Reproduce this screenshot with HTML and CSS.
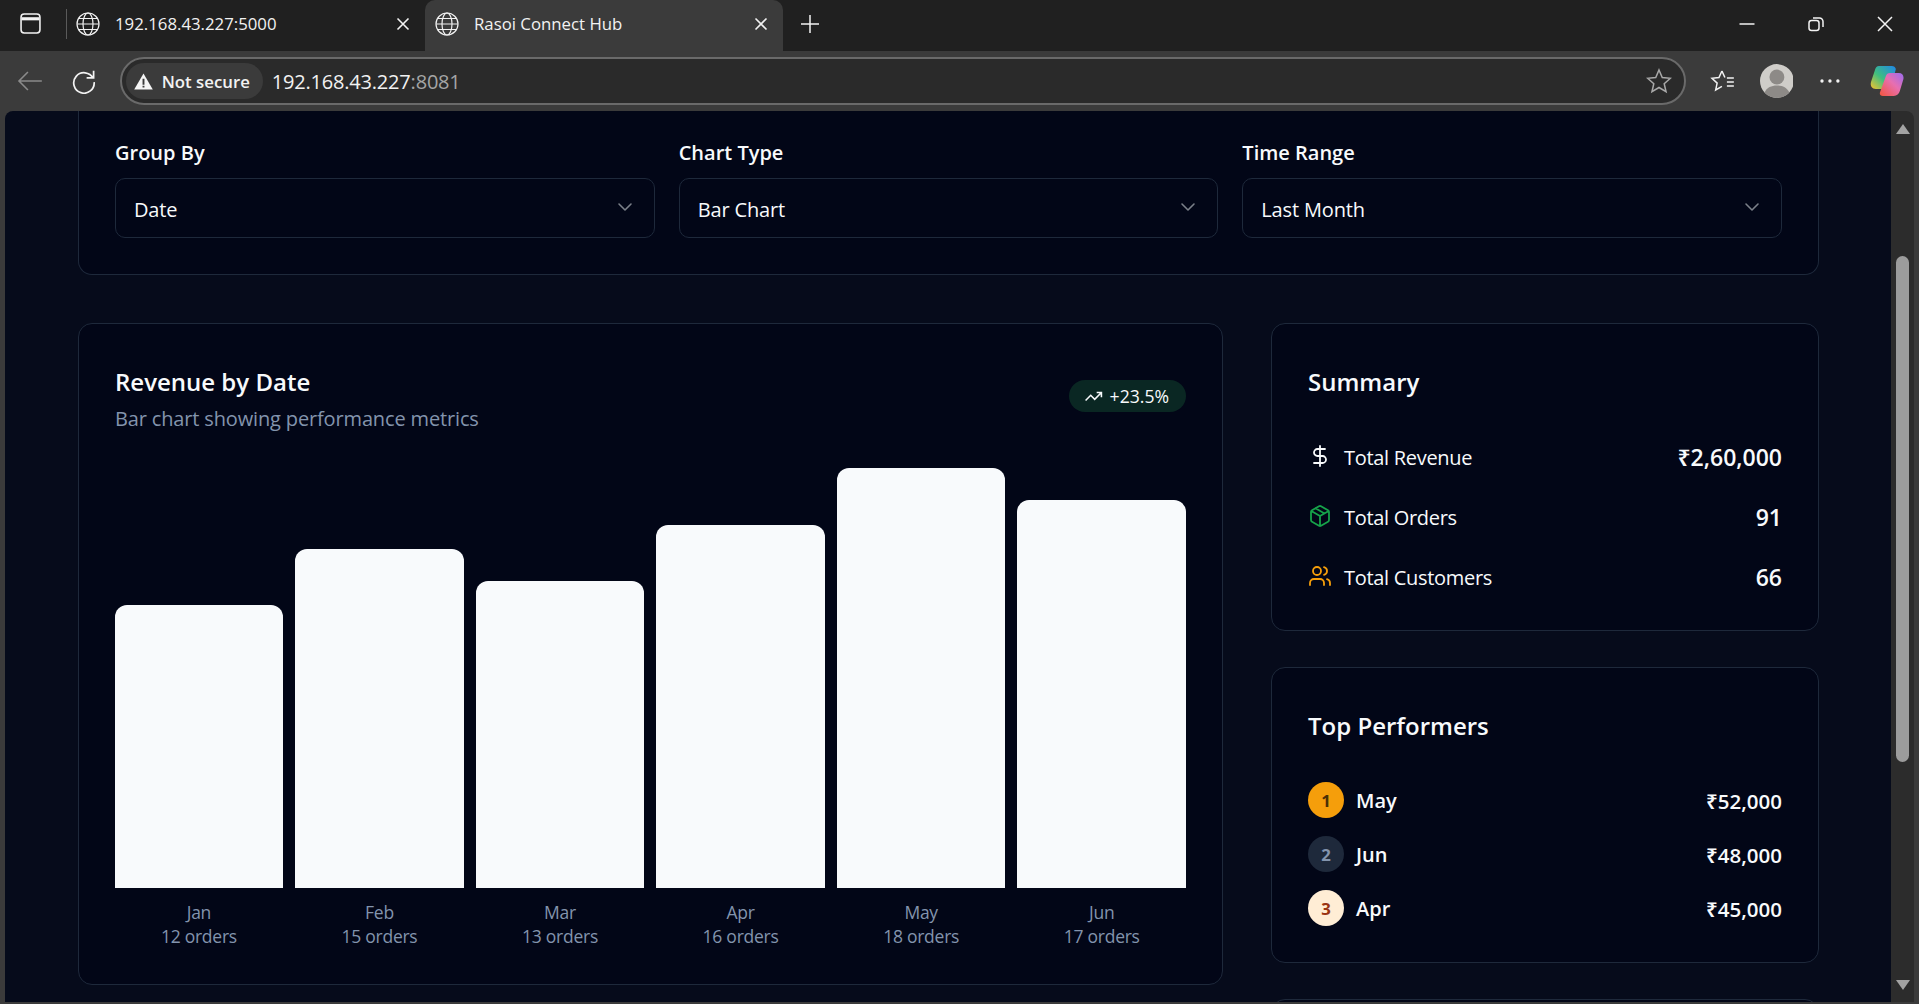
FILE: index.html
```html
<!DOCTYPE html>
<html lang="en">
<head>
<meta charset="utf-8">
<title>Rasoi Connect Hub</title>
<link rel="stylesheet" href="styles.css">
</head>
<body>
<svg class="defs" width="0" height="0" aria-hidden="true">
  <symbol id="globe" viewBox="0 0 24 24"><circle cx="12" cy="12" r="11"/><ellipse cx="12" cy="12" rx="5" ry="11"/><path d="M1 12h22M2.6 6.5h18.8M2.6 17.5h18.8"/></symbol>
  <symbol id="close" viewBox="0 0 14 14"><path d="M1.5 1.5l11 11M12.5 1.5l-11 11"/></symbol>
  <symbol id="chev" viewBox="0 0 24 24"><path d="m6 9 6 6 6-6"/></symbol>
  <linearGradient id="cpA" x1="0" y1="1" x2="1" y2="0"><stop offset="0" stop-color="#f7c32e"/><stop offset=".45" stop-color="#3fbf7f"/><stop offset="1" stop-color="#1f86e8"/></linearGradient>
  <linearGradient id="cpB" x1="0" y1="1" x2="1" y2="0"><stop offset="0" stop-color="#f2553d"/><stop offset=".55" stop-color="#e86fb0"/><stop offset="1" stop-color="#9a6cf0"/></linearGradient>
</svg>

<header class="tabstrip">
  <svg class="sidebar-icon" viewBox="0 0 20 20"><rect x="1" y="1" width="18" height="18" rx="3"/><path d="M1.5 5.5h17" class="thick"/></svg>
  <span class="tab-divider"></span>
  <div class="tab">
    <svg class="globe"><use href="#globe"/></svg>
    <span class="tab-title">192.168.43.227:5000</span>
    <svg class="tab-close"><use href="#close"/></svg>
  </div>
  <div class="tab tab-active">
    <svg class="globe"><use href="#globe"/></svg>
    <span class="tab-title">Rasoi Connect Hub</span>
    <svg class="tab-close"><use href="#close"/></svg>
  </div>
  <svg class="new-tab" viewBox="0 0 20 20"><path d="M10 1v18M1 10h18"/></svg>
  <div class="win-controls">
    <svg class="win-btn" viewBox="0 0 16 16"><path d="M0.5 8h15"/></svg>
    <svg class="win-btn" viewBox="0 0 16 16"><rect x="1" y="4.5" width="10" height="10" rx="2.5"/><path d="M5 2h6.5A3.5 3.5 0 0 1 15 5.500V11"/></svg>
    <svg class="win-btn" viewBox="0 0 16 16"><path d="M1 1l14 14M15 1L1 15"/></svg>
  </div>
</header>

<nav class="toolbar">
  <svg class="tool back" viewBox="0 0 26 24"><path d="M25 12H2M11 3l-9 9 9 9"/></svg>
  <svg class="tool reload" viewBox="0 0 24 24"><path d="M20.500 9.500A9.500 9.500 0 1 0 21.500 13M21 2.500V9h-6.500"/></svg>
  <div class="omnibox">
    <div class="secure-pill">
      <svg class="warn" viewBox="0 0 18 16"><path d="M9 .5 17.800 15.500H.2Z"/><path class="warn-mark" d="M8.100 5.500h1.800v5.500H8.100zM8.100 12h1.800v1.800H8.100z"/></svg>
      <span>Not secure</span>
    </div>
    <span class="url">192.168.43.227<span class="url-port">:8081</span></span>
    <svg class="omni-star" viewBox="0 0 24 24"><path d="M12 1.800l3 7 7.500.7-5.700 5 1.700 7.400L12 18l-6.500 3.900 1.700-7.400-5.700-5 7.500-.7z"/></svg>
  </div>
  <svg class="fav" viewBox="0 0 26 24"><path d="M12 2 9 8.500l-7 .8 5.200 4.800L5.700 21l6.300-3.500M12 2l3 6.500M17 9h7M17 13h7M17 17h7"/></svg>
  <svg class="avatar" viewBox="0 0 34 34"><circle cx="17" cy="17" r="17" fill="#cfcdc9"/><circle cx="17" cy="13" r="7.500" fill="#8d8a87"/><path d="M4.500 28.500C7 23.500 11.500 21.500 17 21.500s10 2 12.500 7A17 17 0 0 1 4.500 28.500Z" fill="#8d8a87"/></svg>
  <svg class="dots" viewBox="0 0 20 4"><circle cx="2" cy="2" r="1.700"/><circle cx="10" cy="2" r="1.700"/><circle cx="18" cy="2" r="1.700"/></svg>
  <svg class="copilot" viewBox="0 0 34 32"><path fill="url(#cpA)" d="M9 1h13c2 0 3.500 1 4 3L22 20c-.7 2.500-2 4-5 4H6C2 24 0 21 1 17L5 5C5.700 2.500 7 1 9 1Z"/><path fill="url(#cpB)" d="M16 11c.7-2 2-3 4-3h9c3.500 0 5.500 3 4.500 6.500L30 26c-.8 3-3 5-6 5H13c-2.500 0-3.500-1.500-3-3.500Z"/></svg>
</nav>

<div class="viewport">
  <main class="page">
    <section class="card filters">
      <div class="field">
        <label class="field-label">Group By</label>
        <div class="select"><span>Date</span><svg class="chev"><use href="#chev"/></svg></div>
      </div>
      <div class="field">
        <label class="field-label">Chart Type</label>
        <div class="select"><span>Bar Chart</span><svg class="chev"><use href="#chev"/></svg></div>
      </div>
      <div class="field">
        <label class="field-label">Time Range</label>
        <div class="select"><span>Last Month</span><svg class="chev"><use href="#chev"/></svg></div>
      </div>
    </section>

    <div class="columns">
      <section class="card chart-card">
        <div class="chart-head">
          <div>
            <h2 class="card-title">Revenue by Date</h2>
            <p class="card-sub">Bar chart showing performance metrics</p>
          </div>
          <span class="trend">
            <svg class="trend-icon" viewBox="0 0 24 24"><path d="M22 7l-8.500 8.500-5-5L2 17M16 7h6v6"/></svg>
            +23.5%
          </span>
        </div>
        <div class="bars">
          <div class="bar-col"><div class="bar-slot"><div class="bar" style="height:283px"></div></div><div class="bar-label">Jan<br>12 orders</div></div>
          <div class="bar-col"><div class="bar-slot"><div class="bar" style="height:339px"></div></div><div class="bar-label">Feb<br>15 orders</div></div>
          <div class="bar-col"><div class="bar-slot"><div class="bar" style="height:307px"></div></div><div class="bar-label">Mar<br>13 orders</div></div>
          <div class="bar-col"><div class="bar-slot"><div class="bar" style="height:363px"></div></div><div class="bar-label">Apr<br>16 orders</div></div>
          <div class="bar-col"><div class="bar-slot"><div class="bar" style="height:420px"></div></div><div class="bar-label">May<br>18 orders</div></div>
          <div class="bar-col"><div class="bar-slot"><div class="bar" style="height:388px"></div></div><div class="bar-label">Jun<br>17 orders</div></div>
        </div>
      </section>

      <aside class="side">
        <section class="card side-card">
          <h2 class="card-title">Summary</h2>
          <ul class="stat-list">
            <li class="stat">
              <svg class="stat-icon" viewBox="0 0 24 24"><path d="M12 2v20M17 5H9.500a3.500 3.500 0 0 0 0 7h5a3.500 3.500 0 0 1 0 7H6"/></svg>
              <span class="stat-name">Total Revenue</span><strong class="stat-value">₹2,60,000</strong>
            </li>
            <li class="stat">
              <svg class="stat-icon green" viewBox="0 0 24 24"><path d="m7.500 4.270 9 5.150M21 8a2 2 0 0 0-1-1.730l-7-4a2 2 0 0 0-2 0l-7 4A2 2 0 0 0 3 8v8a2 2 0 0 0 1 1.730l7 4a2 2 0 0 0 2 0l7-4A2 2 0 0 0 21 16ZM3.300 7l8.700 5 8.700-5M12 22V12"/></svg>
              <span class="stat-name">Total Orders</span><strong class="stat-value">91</strong>
            </li>
            <li class="stat">
              <svg class="stat-icon amber" viewBox="0 0 24 24"><path d="M16 21v-2a4 4 0 0 0-4-4H6a4 4 0 0 0-4 4v2M22 21v-2a4 4 0 0 0-3-3.870M16 3.130a4 4 0 0 1 0 7.750"/><circle cx="9" cy="7" r="4"/></svg>
              <span class="stat-name">Total Customers</span><strong class="stat-value">66</strong>
            </li>
          </ul>
        </section>

        <section class="card side-card">
          <h2 class="card-title">Top Performers</h2>
          <ul class="rank-list">
            <li class="rank"><span class="medal gold">1</span><span class="rank-name">May</span><span class="rank-value">₹52,000</span></li>
            <li class="rank"><span class="medal silver">2</span><span class="rank-name">Jun</span><span class="rank-value">₹48,000</span></li>
            <li class="rank"><span class="medal bronze">3</span><span class="rank-name">Apr</span><span class="rank-value">₹45,000</span></li>
          </ul>
        </section>

        <section class="card stub"></section>
      </aside>
    </div>
  </main>
  <div class="scrollbar">
    <span class="arrow-up"></span>
    <div class="track"><div class="thumb"></div></div>
    <span class="arrow-down"></span>
  </div>
</div>
</body>
</html>
```
FILE: styles.css
```css
* { box-sizing: border-box; }
html, body { margin: 0; height: 100%; overflow: hidden; }
body {
  display: flex;
  flex-direction: column;
  background: #3b3b3b;
  color: #f8fafc;
  font-family: "Open Sans", "Noto Sans", sans-serif;
}
.defs { position: absolute; }
h2, p, ul { margin: 0; padding: 0; }
ul { list-style: none; }
svg { display: block; fill: none; stroke: currentColor; }

/* browser chrome */
.tabstrip {
  height: 51px;
  flex: none;
  display: flex;
  align-items: center;
  background: #202020;
  color: #f2f2f2;
  font-size: 16.800px;
}
.sidebar-icon { width: 21px; height: 21px; margin: 0 0 4px 20px; stroke-width: 1.500; }
.sidebar-icon .thick { stroke-width: 3; }
.tab-divider { width: 1px; height: 30px; margin: 0 9px 4px 25px; background: #5a5a5a; }
.tab {
  width: 349px;
  height: 51px;
  display: flex;
  align-items: center;
  padding-bottom: 4px;
}
.tab-active {
  width: 358px;
  padding-left: 10px;
  background: #3b3b3b;
  border-radius: 10px 10px 0 0;
}
.globe { width: 24px; height: 24px; stroke-width: 1.200; flex: none; }
.tab-title { margin-left: 15px; flex: 1; }
.tab-close { width: 14px; height: 14px; stroke-width: 1.600; margin-right: 15px; flex: none; }
.new-tab { width: 20px; height: 20px; margin: 0 0 4px 17px; stroke-width: 1.500; }
.win-controls { margin: 0 26px 4px auto; display: flex; gap: 53px; }
.win-btn { width: 16px; height: 16px; stroke-width: 1.500; }

.toolbar {
  height: 60px;
  flex: none;
  display: flex;
  align-items: center;
  background: #3b3b3b;
  color: #f2f2f2;
  padding-right: 15px;
}
.tool { stroke-width: 1.600; }
.back { width: 26px; height: 24px; margin-left: 17px; color: #8a8a8a; }
.reload { width: 26px; height: 26px; margin-left: 28px; }
.omnibox {
  flex: none;
  margin-left: 23px;
  width: 1566px;
  height: 48px;
  display: flex;
  align-items: center;
  padding: 0 12px 0 4px;
  border: 2px solid #6a6a6a;
  border-radius: 24px;
  background: #2a2a2a;
}
.secure-pill {
  height: 36px;
  display: flex;
  align-items: center;
  gap: 9px;
  padding: 0 13px 0 8px;
  border-radius: 18px;
  background: #3b3b3b;
  font-size: 16.800px;
  font-weight: 600;
}
.warn { width: 19px; height: 17px; fill: #f5f5f5; stroke: none; }
.warn-mark { fill: #3b3b3b; }
.url { margin-left: 9px; font-size: 20px; letter-spacing: -.2px; flex: 1; }
.url-port { color: #a5a5a5; }
.omni-star { width: 26px; height: 26px; color: #a8a8a8; stroke-width: 1.400; }
.fav { width: 26px; height: 24px; margin-left: 24px; stroke-width: 1.500; }
.avatar { width: 34px; height: 34px; margin-left: 24px; stroke: none; }
.dots { width: 20px; height: 4px; margin-left: 27px; fill: #f2f2f2; stroke: none; }
.copilot { width: 34px; height: 32px; margin-left: 30px; stroke: none; }

/* viewport */
.viewport {
  height: 891px;
  flex: none;
  margin-left: 5px;
  margin-right: 5px;
  display: flex;
  border-radius: 8px 8px 0 0;
  overflow: hidden;
}
.page {
  flex: 1;
  min-width: 0;
  padding: 0 72px 0 73px;
  background: #060b1b;
  overflow: hidden;
}
.card {
  border: 1px solid #1e293b;
  border-radius: 14px;
  background: #020617;
}
.filters {
  border-top: 0;
  border-radius: 0 0 14px 14px;
  padding: 27px 36px 36px;
  display: grid;
  grid-template-columns: repeat(3, 1fr);
  gap: 24px;
}
.field-label {
  display: block;
  height: 29px;
  margin: 0 0 11px;
  line-height: 29px;
  font-size: 20px;
  font-weight: 600;
}
.select {
  height: 60px;
  display: flex;
  align-items: center;
  justify-content: space-between;
  padding: 2px 17px 0 18px;
  border: 1px solid #1e293b;
  border-radius: 10px;
  font-size: 20px;
  letter-spacing: -.15px;
}
.chev { width: 24px; height: 24px; margin-top: -5px; color: #7b8089; stroke-width: 1.600; stroke-linecap: round; stroke-linejoin: round; }

.columns {
  margin-top: 48px;
  display: grid;
  grid-template-columns: 1145fr 548fr;
  gap: 48px;
  align-items: start;
}
.chart-card { padding: 36px; height: 662px; }
.chart-head { display: flex; justify-content: space-between; align-items: flex-start; height: 73px; margin-bottom: 35px; }
.card-title {
  font-size: 24px;
  line-height: 44px;
  font-weight: 600;
}
.card-sub {
  font-size: 20px;
  line-height: 29px;
  color: #8394ad;
  letter-spacing: -.15px;
}
.trend {
  height: 32px;
  margin-top: 20px;
  display: flex;
  align-items: center;
  gap: 7px;
  padding: 0 17px 0 15px;
  border-radius: 16px;
  background: #0a2723;
  font-size: 17.600px;
  font-weight: 500;
}
.trend-icon { width: 19px; height: 19px; stroke-width: 2; }
.bars { display: flex; gap: 12px; margin-left: -.4px; }
.bar-col { flex: 1; min-width: 0; text-align: center; }
.bar-slot { height: 420px; display: flex; align-items: flex-end; }
.bar { width: 100%; background: #f8fafc; border-radius: 12px 12px 0 0; }
.bar-label {
  margin-top: 12px;
  font-size: 17.500px;
  line-height: 24px;
  color: #8394ad;
  letter-spacing: -.25px;
}

.side { display: flex; flex-direction: column; gap: 36px; }
.side-card { padding: 36px; }
.stat-list { margin-top: 34px; display: flex; flex-direction: column; gap: 24px; }
.stat { height: 36px; display: flex; align-items: center; }
.stat-icon { width: 24px; height: 24px; flex: none; stroke-width: 1.800; stroke-linecap: round; stroke-linejoin: round; }
.green { color: #16a34a; }
.amber { color: #f59e0b; }
.stat-name { margin-left: 12px; flex: 1; font-size: 20px; letter-spacing: -.3px; padding-top: 2px; }
.stat-value { font-size: 23px; font-weight: 600; padding-top: 2px; }
.rank-list { margin-top: 34px; display: flex; flex-direction: column; gap: 18px; }
.rank { height: 36px; display: flex; align-items: center; }
.medal {
  width: 36px;
  height: 36px;
  display: flex;
  align-items: center;
  justify-content: center;
  border-radius: 50%;
  font-size: 16.800px;
  font-weight: 700;
}
.gold { background: #f59e0b; color: #4a3006; }
.silver { background: #1e293b; color: #8394ad; }
.bronze { background: #ffedd5; color: #9a3412; }
.rank-name { margin-left: 12px; flex: 1; font-size: 20px; font-weight: 600; padding-top: 1px; }
.rank-value { font-size: 20.500px; font-weight: 600; padding-top: 1px; }
.stub { height: 60px; }

/* scrollbar */
.scrollbar {
  width: 23px;
  flex: none;
  display: flex;
  flex-direction: column;
  align-items: center;
  background: #2c2c2c;
}
.arrow-up, .arrow-down {
  width: 0;
  height: 0;
  flex: none;
  border-left: 7px solid transparent;
  border-right: 7px solid transparent;
}
.arrow-up { margin-top: 13px; border-bottom: 10px solid #a3a3a3; }
.arrow-down { margin-bottom: 12px; border-top: 10px solid #a3a3a3; }
.track { flex: 1; width: 100%; padding: 122px 5px 0; }
.thumb { height: 506px; background: #9c9c9c; border-radius: 7px; }
```
